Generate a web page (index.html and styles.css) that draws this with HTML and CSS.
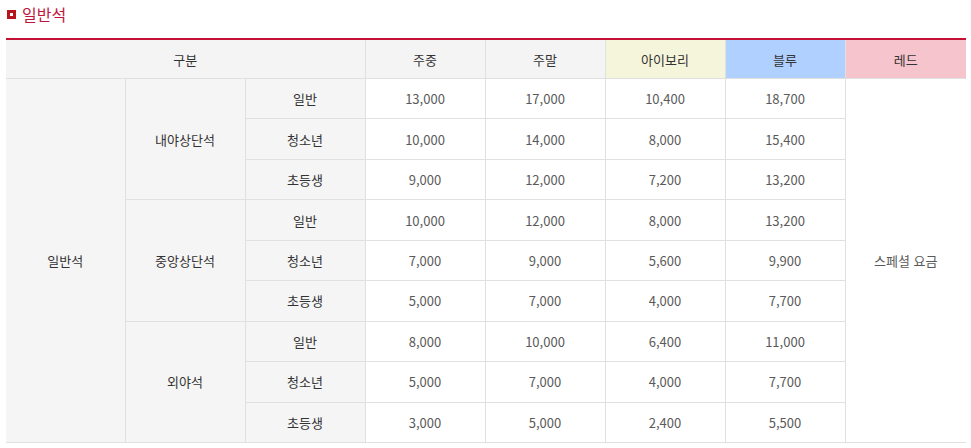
FILE: index.html
```html
<!DOCTYPE html>
<html lang="ko">
<head>
<meta charset="utf-8">
<title>일반석</title>
<link rel="stylesheet" href="styles.css">
</head>
<body>
<div class="wrap">
  <h2 class="title"><span class="title-icon"></span>일반석</h2>
  <table class="price">
    <colgroup>
      <col class="c-first"><col><col><col><col><col><col><col class="c-last">
    </colgroup>
    <thead>
      <tr>
        <th colspan="3">구분</th>
        <th>주중</th>
        <th>주말</th>
        <th class="ivory">아이보리</th>
        <th class="blue">블루</th>
        <th class="red">레드</th>
      </tr>
    </thead>
    <tbody>
      <tr>
        <th rowspan="9">일반석</th>
        <th rowspan="3">내야상단석</th>
        <th>일반</th>
        <td>13,000</td><td>17,000</td><td>10,400</td><td>18,700</td>
        <td rowspan="9" class="special">스페셜 요금</td>
      </tr>
      <tr><th>청소년</th><td>10,000</td><td>14,000</td><td>8,000</td><td>15,400</td></tr>
      <tr><th>초등생</th><td>9,000</td><td>12,000</td><td>7,200</td><td>13,200</td></tr>
      <tr>
        <th rowspan="3">중앙상단석</th>
        <th>일반</th>
        <td>10,000</td><td>12,000</td><td>8,000</td><td>13,200</td>
      </tr>
      <tr><th>청소년</th><td>7,000</td><td>9,000</td><td>5,600</td><td>9,900</td></tr>
      <tr><th>초등생</th><td>5,000</td><td>7,000</td><td>4,000</td><td>7,700</td></tr>
      <tr>
        <th rowspan="3">외야석</th>
        <th>일반</th>
        <td>8,000</td><td>10,000</td><td>6,400</td><td>11,000</td>
      </tr>
      <tr><th>청소년</th><td>5,000</td><td>7,000</td><td>4,000</td><td>7,700</td></tr>
      <tr><th>초등생</th><td>3,000</td><td>5,000</td><td>2,400</td><td>5,500</td></tr>
    </tbody>
  </table>
</div>
</body>
</html>
```

FILE: styles.css
```css
html, body {
  margin: 0;
  padding: 0;
  background: #fff;
}

body {
  font-family: "Noto Sans CJK KR", "Noto Sans", sans-serif;
  color: #333;
}

.wrap {
  padding: 0 5px 0 6px;
}

.title {
  display: flex;
  align-items: center;
  gap: 6px;
  height: 28px;
  margin: 0 0 10px 0;
  padding-left: 1px;
  font-size: 16px;
  font-weight: 400;
  color: #c0143c;
  line-height: 1;
}

.title-icon {
  display: inline-block;
  width: 3px;
  height: 3px;
  border: 3px solid #b8141e;
  background: #fff;
  margin-top: 1px;
}

.price {
  width: 960px;
  border-collapse: collapse;
  table-layout: fixed;
  border-top: 2px solid #c41237;
  font-size: 13px;
}

.price col {
  width: 120px;
}

.price col.c-first {
  width: 119px;
}

.price col.c-last {
  width: 121px;
}

.price th,
.price td {
  padding: 0;
  text-align: center;
  vertical-align: middle;
  border: 1px solid #e0e0e0;
  font-weight: 400;
}

.price tr > :first-child {
  border-left: none;
}

.price tr > :last-child {
  border-right: none;
}

.price thead th {
  height: 38px;
  background: #f4f4f4;
  color: #333;
  border-top: 2px solid #c41237;
}

.price thead th.ivory { background: #f5f5dc; }
.price thead th.blue { background: #b0d0ff; }
.price thead th.red { background: #f6c4cc; }

.price tbody tr {
  height: 40.44px;
}

.price tbody th {
  background: #f5f5f5;
  color: #333;
}

.price tbody td {
  background: #fff;
  color: #5a5a5a;
}

.price tbody td.special {
  border-right: none;
}
```
